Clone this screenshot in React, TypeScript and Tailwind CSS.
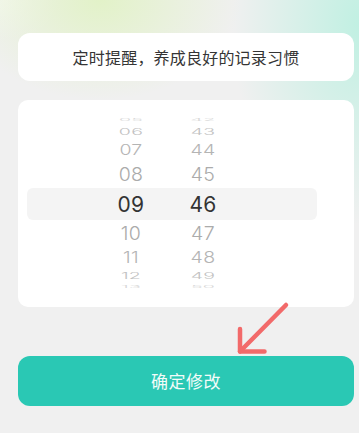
import React from "react";

type Row = { h: string; m: string; hc: string; sc: string; cc: string; sel?: boolean };

const rows: Row[] = [
  { h: "05", m: "42", hc: "h-[9px]", sc: "scale-y-[0.18]", cc: "text-[#d6d6d6]" },
  { h: "06", m: "43", hc: "h-[15px]", sc: "scale-y-[0.45]", cc: "text-[#c2c2c2]" },
  { h: "07", m: "44", hc: "h-[23px]", sc: "scale-y-[0.72]", cc: "text-[#b4b4b4]" },
  { h: "08", m: "45", hc: "h-[26px]", sc: "scale-y-[0.95]", cc: "text-[#ababab]" },
  { h: "09", m: "46", hc: "h-[32px]", sc: "scale-y-[1]", cc: "text-[#333333]", sel: true },
  { h: "10", m: "47", hc: "h-[27px]", sc: "scale-y-[0.95]", cc: "text-[#ababab]" },
  { h: "11", m: "48", hc: "h-[22px]", sc: "scale-y-[0.8]", cc: "text-[#b4b4b4]" },
  { h: "12", m: "49", hc: "h-[14px]", sc: "scale-y-[0.48]", cc: "text-[#c2c2c2]" },
  { h: "13", m: "50", hc: "h-[8px]", sc: "scale-y-[0.18]", cc: "text-[#d6d6d6]" },
];

function PickerRow({ r }: { r: Row }) {
  const base = r.sel
    ? "text-[21px] font-normal tracking-[0.3px]"
    : "text-[19.5px] font-light tracking-[0.3px]";
  return (
    <div
      className={`${r.hc} flex items-center pl-[76px] gap-[16px] ${
        r.sel ? "bg-[#f4f4f4] rounded-[6px]" : ""
      }`}
    >
      <div className="w-[56px] flex justify-center">
        <span className={`block leading-none ${base} ${r.sc} ${r.cc}`}>{r.h}</span>
      </div>
      <div className="w-[56px] flex justify-center">
        <span className={`block leading-none ${base} ${r.sc} ${r.cc}`}>{r.m}</span>
      </div>
    </div>
  );
}

export default function App() {
  return (
    <div className="relative w-[359px] h-[433px] overflow-hidden bg-[#f0f0f0] bg-[image:radial-gradient(140px_100px_at_100px_0px,#e2f2c8,transparent),radial-gradient(130px_200px_at_362px_25px,#c0f0e2,transparent),radial-gradient(60px_40px_at_0px_0px,#f6f8f3,transparent)] font-['Noto_Sans_CJK_SC','Noto_Sans',sans-serif]">
      <div className="flex flex-col pl-[18px] pr-[5px] pt-[33px]">
        <div className="h-[48px] rounded-[12px] bg-white flex items-center justify-center text-[16px] tracking-[0.2px] text-[#353535]">
          定时提醒，养成良好的记录习惯
        </div>
        <div className="mt-[19px] h-[207px] rounded-[10px] bg-white pt-[15px] pl-[9px] font-['Inter',sans-serif]">
          <div className="w-[290px] flex flex-col">
            {rows.map((r) => (
              <PickerRow key={r.h} r={r} />
            ))}
          </div>
        </div>
        <button className="mt-[49px] h-[50px] rounded-[12px] bg-[#2ac8b4] flex items-center justify-center text-[17px] tracking-[0.5px] text-[#f2fcf9]">
          确定修改
        </button>
      </div>
      <svg
        className="absolute left-[230px] top-[298px] w-[64px] h-[62px]"
        viewBox="0 0 64 62"
        fill="none"
        stroke="#f26a6a"
        strokeWidth="4.5"
        strokeLinecap="round"
        strokeLinejoin="round"
      >
        <path d="M56 7 L10 53.5" />
        <path d="M10 31 L10 53.5 L34.5 53.5" />
      </svg>
    </div>
  );
}
